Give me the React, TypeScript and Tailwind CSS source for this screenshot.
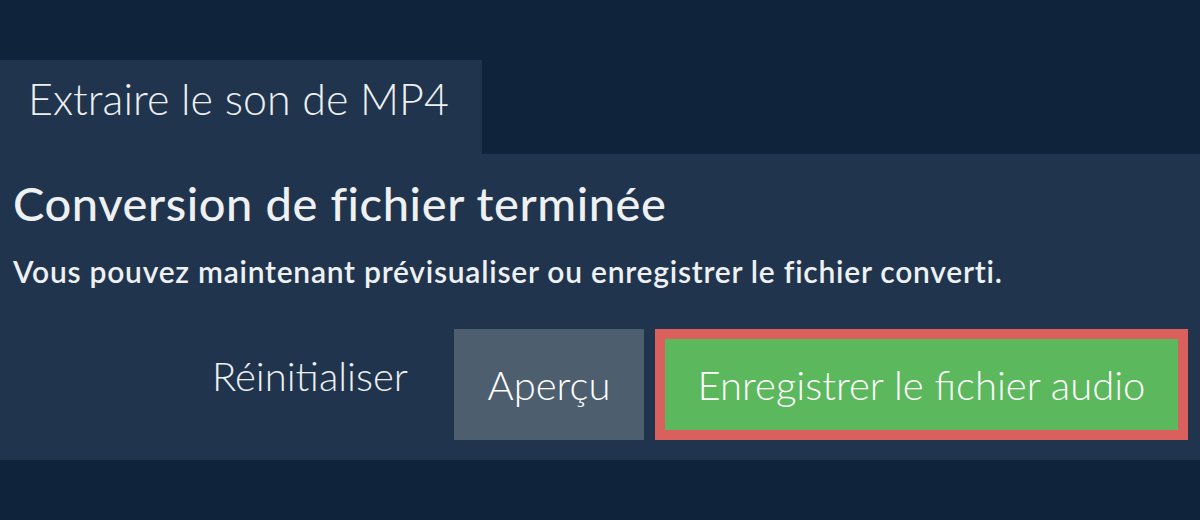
export default function App() {
  return (
    <div className="w-[1200px] h-[520px] bg-[#0f243a] pt-[60px]" style={{ fontFamily: 'Lato, "Noto Sans", sans-serif' }}>
      <div className="w-[482px] h-[94px] bg-[#20354d] pl-[28px] pt-[17px]">
        <span className="block text-[43px] font-light text-[#eef0f2] leading-none">Extraire le son de MP4</span>
      </div>
      <div className="bg-[#20354d] h-[306px] pl-[13px] pr-[12px] pt-[26px]">
        <h1 className="text-[47px] font-medium tracking-[0.6px] text-[#eef0f2] leading-none">Conversion de fichier terminée</h1>
        <p className="mt-[29px] text-[30px] font-semibold tracking-[0.75px] text-[#eef0f2] leading-none">Vous pouvez maintenant prévisualiser ou enregistrer le fichier converti.</p>
        <div className="mt-[43px] flex justify-end items-center">
          <button className="mr-[46px] mb-[18px] text-[40px] font-light text-[#eef0f2] leading-none">Réinitialiser</button>
          <button className="w-[190px] h-[111px] bg-[#4d5e6f] text-[40px] font-light text-white leading-none">Aperçu</button>
          <button className="ml-[11px] w-[533px] h-[111px] border-[10px] border-[#d9605c] bg-[#5cb85c] text-[40px] font-light text-white leading-none">Enregistrer le fichier audio</button>
        </div>
      </div>
    </div>
  );
}
